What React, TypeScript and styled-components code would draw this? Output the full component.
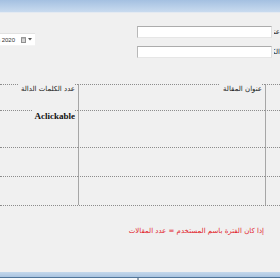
import React from "react";
import styled, { createGlobalStyle } from "styled-components";

const Global = createGlobalStyle`
  html, body { margin: 0; padding: 0; }
  body {
    width: 280px;
    height: 280px;
    overflow: hidden;
    background: #f0f0f0;
    font-family: "DejaVu Sans", sans-serif;
  }
`;

const Page = styled.div`
  display: flex;
  flex-direction: column;
  width: 280px;
  height: 280px;
  background: #f0f0f0;
`;

const TitleBar = styled.div`
  height: 12px;
  flex: none;
  background: linear-gradient(#a4c0e1, #c9dbef);
  border-bottom: 1px solid #e4eaf2;
`;

const TopSection = styled.div`
  display: grid;
  grid-template-columns: 1fr auto;
  height: 71px;
  flex: none;
`;

const DateBox = styled.div`
  margin-top: 20px;
  width: 35px;
  height: 13px;
  box-sizing: border-box;
  background: #fff;
  border-top: 1px solid #e2e2e2;
  border-bottom: 1px solid #f4f4f4;
  display: flex;
  align-items: center;
  justify-content: flex-end;
  gap: 2px;
  padding-right: 3px;
  overflow: hidden;
  font-family: "Liberation Sans", sans-serif;
  font-size: 6px;
  color: #333;
  white-space: nowrap;
`;

const DateText = styled.span`
  flex: none;
  margin-right: 4px;
`;

const Inputs = styled.div`
  display: flex;
  flex-direction: column;
  gap: 8px;
  padding-top: 13px;
`;

const InputRow = styled.div`
  display: flex;
  align-items: center;
  gap: 2px;
`;

const TextBox = styled.div`
  width: 135px;
  height: 12px;
  box-sizing: border-box;
  background: #fff;
  border: 1px solid;
  border-color: #acacac #e0e0e0 #e6e6e6 #b8b8b8;
`;

const Label = styled.div`
  width: 6px;
  overflow: hidden;
  direction: rtl;
  white-space: nowrap;
  font-size: 7px;
  color: #222;
`;

const Table = styled.div`
  display: grid;
  grid-template-columns: 78px 187px 15px;
  grid-template-rows: 26px 37px 29px 29px;
  border-bottom: 1px dotted #8c8c8c;
  flex: none;
`;

const Cell = styled.div<{ $first?: boolean }>`
  box-sizing: border-box;
  border-top: 1px dotted #8c8c8c;
  border-left: ${(p) => (p.$first ? "none" : "1px solid #a6a6a6")};
  display: flex;
  justify-content: flex-end;
  align-items: flex-start;
  padding-right: 3px;
`;

const HeadLabel = styled.span`
  margin-top: -1px;
  background: #f0f0f0;
  padding-left: 3px;
  direction: rtl;
  font-size: 7px;
  line-height: 10px;
  color: #1a1a1a;
  white-space: nowrap;
`;

const ValueLabel = styled.span`
  margin-top: -2px;
  background: #f0f0f0;
  padding: 0 0 0 2px;
  font-family: "Liberation Serif", serif;
  font-weight: bold;
  font-size: 9px;
  line-height: 14px;
  color: #111;
`;

const Note = styled.div`
  direction: rtl;
  padding: 20px 16px 0 0;
  font-size: 7px;
  line-height: 10px;
  color: #e2232b;
  white-space: nowrap;
  flex: none;
`;

const Spacer = styled.div`
  flex: 1;
`;

const BottomBar = styled.div`
  flex: none;
  height: 8px;
  display: flex;
  flex-direction: column;
`;

const BottomStrip = styled.div`
  height: 5px;
  background: linear-gradient(#c4d8ec, #aac4e0);
`;

const BottomBase = styled.div`
  flex: 1;
  display: grid;
  grid-template-columns: 137px 1fr;
  border-top: 1px solid #51769a;
  background: #f7f9fb;
`;

const Pane = styled.div<{ $split?: boolean }>`
  border-left: ${(p) => (p.$split ? "2px solid #9aa6b2" : "none")};
`;

const CalendarIcon = () => (
  <svg width="5" height="6" viewBox="0 0 5 6" style={{ flex: "none" }}>
    <rect x="0.5" y="0.5" width="4" height="5" fill="#d4d4d4" stroke="#8f8f8f" strokeWidth="1" />
    <rect x="0" y="0" width="5" height="1.5" fill="#9a9a9a" />
  </svg>
);

const Arrow = () => (
  <svg width="4" height="3" viewBox="0 0 4 3" style={{ flex: "none" }}>
    <path d="M0 0 L4 0 L2 2.5 Z" fill="#555" />
  </svg>
);

export default function App() {
  const rows = [
    { right: "عنوان المقالة", left: "عدد الكلمات الدالة", head: true },
    { right: "", left: "Aclickable", head: false },
    { right: "", left: "", head: false },
    { right: "", left: "", head: false },
  ];
  return (
    <>
      <Global />
      <Page>
        <TitleBar />
        <TopSection>
          <div>
            <DateBox>
              <DateText>Jan 2020</DateText>
              <CalendarIcon />
              <Arrow />
            </DateBox>
          </div>
          <Inputs>
            <InputRow>
              <TextBox />
              <Label>عنوان المقالة :</Label>
            </InputRow>
            <InputRow>
              <TextBox />
              <Label>الكلمات الدالة :</Label>
            </InputRow>
          </Inputs>
        </TopSection>
        <Table>
          {rows.map((r, i) => (
            <React.Fragment key={i}>
              <Cell $first>
                {r.left &&
                  (r.head ? <HeadLabel>{r.left}</HeadLabel> : <ValueLabel>{r.left}</ValueLabel>)}
              </Cell>
              <Cell>{r.right && <HeadLabel>{r.right}</HeadLabel>}</Cell>
              <Cell />
            </React.Fragment>
          ))}
        </Table>
        <Note>إذا كان الفترة باسم المستخدم = عدد المقالات</Note>
        <Spacer />
        <BottomBar>
          <BottomStrip />
          <BottomBase>
            <Pane />
            <Pane $split />
          </BottomBase>
        </BottomBar>
      </Page>
    </>
  );
}
